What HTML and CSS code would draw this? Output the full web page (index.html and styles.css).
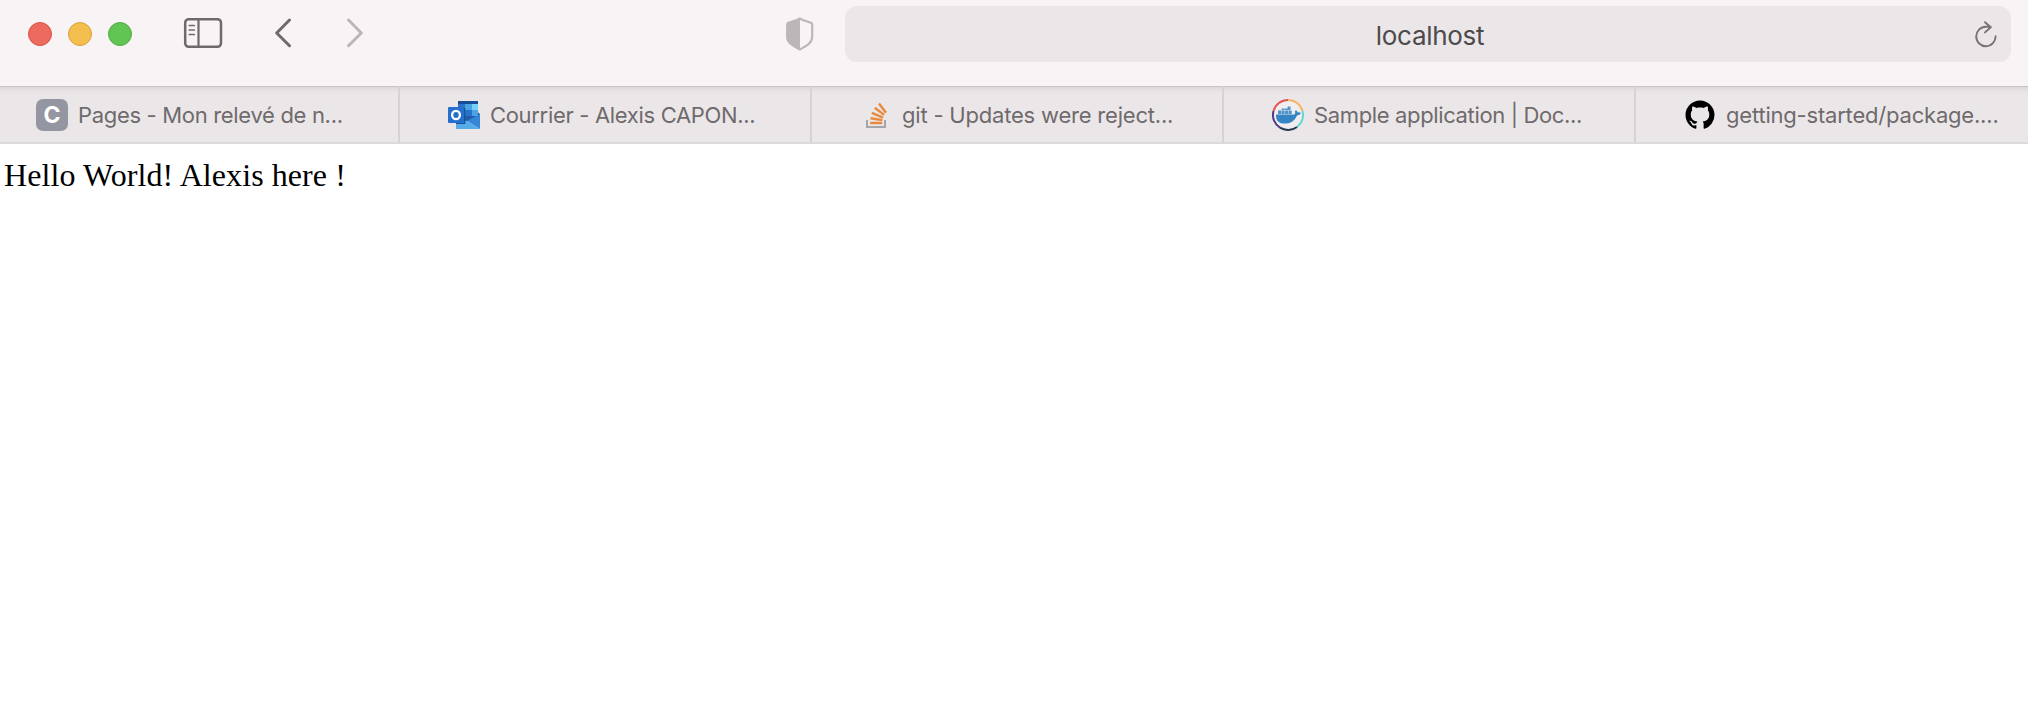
FILE: index.html
```html
<!DOCTYPE html>
<html lang="en">
<head>
<meta charset="utf-8">
<title>localhost</title>
<link rel="stylesheet" href="styles.css">
</head>
<body>
<header class="toolbar">
  <div class="lights"><span class="light red"></span><span class="light yellow"></span><span class="light green"></span></div>
  <svg class="sidebar-icon" width="40" height="32" viewBox="0 0 40 32" fill="none" stroke="#6f696b">
    <rect x="2.2" y="2.2" width="35.8" height="27.6" rx="3.5" stroke-width="2.5"/>
    <path d="M15.5 2v28" stroke-width="2.2"/>
    <path d="M6.3 8.5h5M6.3 13h5M6.3 17.500h5" stroke-width="1.7" stroke-linecap="round"/>
  </svg>
  <svg class="back" width="18" height="30" viewBox="0 0 18 30" fill="none" stroke="#6f696b" stroke-width="3" stroke-linecap="round" stroke-linejoin="round"><path d="M15.500 2L2.700 15l12.800 12.700"/></svg>
  <svg class="forward" width="18" height="30" viewBox="0 0 18 30" fill="none" stroke="#bbb6b8" stroke-width="3" stroke-linecap="round" stroke-linejoin="round"><path d="M2.500 2l12.800 13L2.500 27.700"/></svg>
  <svg class="shield" width="28" height="34" viewBox="0 0 28 34" fill="none">
    <path d="M13.700 1.500C10.500 3.700 6.500 4.300 2.500 5.700Q1.200 6.200 1.200 7.500V20C1.200 26.500 8.500 29.500 13.700 32.500C19 29.500 26.200 26.500 26.200 20V7.500Q26.200 6.200 24.900 5.700C21 4.300 17 3.700 13.700 1.500Z" stroke="#bbb6b8" stroke-width="2.200" stroke-linejoin="round"/>
    <path d="M14 1.500C10.500 3.700 6.500 4.300 2.500 5.700L1.200 7.500V20C1.200 26.500 8.500 29.500 14 32.500Z" fill="#bbb6b8"/>
  </svg>
  <div class="address">
    <span class="host">localhost</span>
    <svg class="reload" width="24" height="28" viewBox="0 0 24 28" fill="none" stroke="#777274" stroke-width="1.900" stroke-linecap="round" stroke-linejoin="round"><path d="M21.600 15.200A9.700 9.700 0 1 1 11.900 5.800H16.500M11 1.200L16.800 6.200L11 11.400"/></svg>
  </div>
</header>
<nav class="tabs">
  <div class="tab">
    <span class="favicon letter">C</span><span class="label l1">Pages - Mon relevé de n...</span>
  </div>
  <div class="tab">
    <svg class="favicon" width="32" height="32" viewBox="0 0 32 32">
      <path d="M10 2h20v19H10z" fill="#2c72c7"/>
      <path d="M10 2h20v3H10z" fill="#174d94"/>
      <path d="M17 5h7v6h-7z" fill="#4ba3e4"/><path d="M24 5h6v6h-6z" fill="#72d3fa"/>
      <path d="M17 11h7v6h-7z" fill="#2772cd"/><path d="M24 11h6v6h-6z" fill="#4ba3e4"/>
      <path d="M17 17h13v5H17z" fill="#1f5daa"/>
      <path d="M30 13.500L32 15L30 17z" fill="#174d94"/>
      <path d="M32 15v15L19 22z" fill="#3586d6"/>
      <path d="M8 19l11 3 13 8H8z" fill="#56abe9"/>
      <path d="M16 9h1.300v16H8v-1h8z" fill="#17549c"/>
      <rect y="8" width="16" height="16" rx="1" fill="#2570cc"/>
      <ellipse cx="8" cy="16" rx="3.900" ry="4.200" fill="none" stroke="#fff" stroke-width="2.300"/>
    </svg><span class="label l2">Courrier - Alexis CAPON...</span>
  </div>
  <div class="tab">
    <svg class="favicon" width="32" height="32" viewBox="0 0 32 32" fill="none">
      <path d="M7 21v7h18v-7" stroke="#a5a5ac" stroke-width="2"/>
      <path d="M6 24h12M6.300 19.200l11.900 1.900M7.600 13.800l11.300 4.900M10.600 8.800l9.300 7.100M14.800 4.600l7 9.200" stroke="#e88a3d" stroke-width="2.400" transform="translate(4.200 0)"/>
    </svg><span class="label l3">git - Updates were reject...</span>
  </div>
  <div class="tab">
    <svg class="favicon" width="32" height="32" viewBox="0 0 32 32" fill="none">
      <circle cx="16" cy="16" r="15" fill="#f0edef"/>
      <g stroke-width="2"><path d="M1.500 12A15 15 0 0 1 16 1" stroke="#e55454"/><path d="M16 1A15 15 0 0 1 30.500 12" stroke="#f6b467"/><path d="M30.500 12A15 15 0 0 1 25 28" stroke="#5ed8d1"/><path d="M25 28A15 15 0 0 1 8 28.700" stroke="#263b50"/><path d="M8 28.700A15 15 0 0 1 1.500 12" stroke="#523b86"/></g>
      <path d="M4 15.500H22.500Q23.800 15 23 12.300L24 11.200Q25.500 12.300 25.700 13.500Q27.500 13 29 14Q28 16.300 25 16.400C22.500 22 18.500 24.600 12.500 24.600C6.500 24.600 3.700 21.500 4 15.500Z" fill="#3585c5"/>
      <path d="M6 11.500h3.200v3.500H6zM9.600 11.500h3.100v3.500H9.600zM13.100 11.500h3.100v3.500h-3.100zM16.600 11.500h3.100v3.500h-3.100zM9.600 9.500h3.100v1.600H9.600zM13.100 9.500h3.100v1.600h-3.100zM15.700 7.500h2.800v3.600h-2.800z" fill="#4d94ca"/>
    </svg><span class="label l4">Sample application | Doc...</span>
  </div>
  <div class="tab">
    <svg class="favicon" width="32" height="32" viewBox="0 0 32 32">
      <path transform="translate(1.500 1.500) scale(1.813)" fill="#000" d="M8 0C3.580 0 0 3.580 0 8c0 3.540 2.290 6.530 5.470 7.590.4.070.55-.17.55-.38 0-.19-.01-.82-.01-1.490-2.010.37-2.530-.49-2.690-.94-.09-.23-.48-.94-.82-1.130-.28-.15-.68-.52-.01-.53.63-.01 1.080.58 1.230.82.72 1.210 1.870.87 2.330.66.07-.52.28-.87.51-1.070-1.780-.2-3.640-.89-3.640-3.950 0-.87.31-1.590.82-2.150-.08-.2-.36-1.020.08-2.120 0 0 .67-.21 2.200.82.64-.18 1.320-.27 2-.27s1.360.09 2 .27c1.530-1.040 2.200-.82 2.200-.82.44 1.100.16 1.920.08 2.120.51.56.82 1.270.82 2.150 0 3.070-1.870 3.750-3.650 3.950.29.25.54.73.54 1.480 0 1.070-.01 1.930-.01 2.200 0 .21.15.46.55.38A8.010 8.010 0 0 0 16 8c0-4.420-3.580-8-8-8z"/>
    </svg><span class="label l5">getting-started/package....</span>
  </div>
</nav>
<main class="page">Hello World! Alexis here !</main>
</body>
</html>
```
FILE: styles.css
```css
* { box-sizing: border-box; }
body { margin: 0; width: 2028px; height: 704px; overflow: hidden; background: #fff; }
.toolbar { display: flex; align-items: flex-start; height: 86px; background: #f8f4f6; }
.toolbar > * { flex-shrink: 0; }
.lights { display: flex; gap: 16px; margin: 22px 0 0 28px; }
.light { width: 24px; height: 24px; border-radius: 50%; border: 1px solid; }
.red { background: #ed6a5e; border-color: #d95349; }
.yellow { background: #f5bf4f; border-color: #daa23c; }
.green { background: #61c554; border-color: #50ac41; }
.sidebar-icon { margin: 17px 0 0 51px; }
.back { margin: 18px 0 0 51px; }
.forward { margin: 18px 0 0 54px; }
.shield { margin: 17px 0 0 422px; }
.address { position: relative; display: flex; justify-content: center; align-items: center; width: 1166px; height: 56px; margin: 6px 0 0 31px; border-radius: 12px; background: #ebe7e9; }
.host { font: 26px/32px Inter, sans-serif; color: #4c4a4b; letter-spacing: -.3px; margin: 3px 0 0 4px; }
.reload { position: absolute; right: 13px; top: 15px; }
.tabs { display: flex; height: 58px; margin-left: -12px; overflow: hidden; background: linear-gradient(#c9c5c7 0 1px, #dbd7d9 1px, #e6e2e4 4px, #ebe7e9 8px); border-bottom: 2px solid #dcdadb; }
.tab { display: flex; align-items: center; flex: 0 0 412px; gap: 10px; padding: 2px 0 0 48px; border-right: 2px solid #d7d3d5; }
.tab:last-child { border-right: 0; }
.favicon { flex: 0 0 32px; }
.letter { height: 32px; border-radius: 7px; background: #9496a2; color: #fff; font: 700 23px/32px Inter, sans-serif; text-align: center; }
.label { font: 22px/28px Inter, sans-serif; color: #6f6a6c; white-space: nowrap; }
.l1, .l2 { letter-spacing: -.32px; }
.l3, .l5 { letter-spacing: -.2px; }
.l4 { letter-spacing: -.36px; }
.page { padding: 12px 0 0 4px; font: 32px/38px "Liberation Serif", serif; letter-spacing: .08px; color: #000; }
```
